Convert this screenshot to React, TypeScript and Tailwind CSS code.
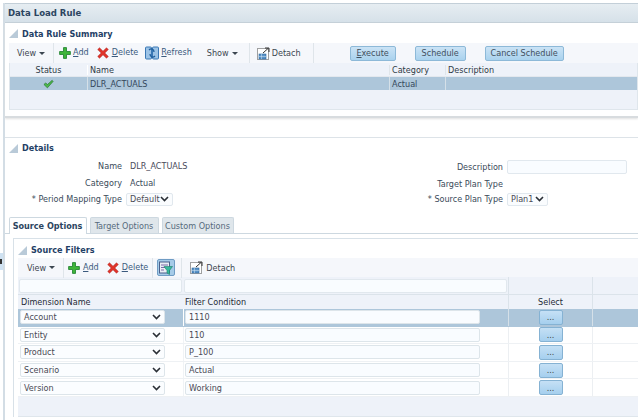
import React from "react";

const Corner = () => (
  <svg width="9" height="9" viewBox="0 0 9 9" className="shrink-0"><path d="M0 9 L9 0 L9 9 Z" fill="#b9cad8" /></svg>
);
const Plus = () => (
  <svg width="12" height="12" viewBox="0 0 12 12" className="shrink-0"><path d="M4.500 0.600h3v3.900h3.900v3H7.500v3.900h-3V7.500H0.600v-3h3.900z" fill="#3fb53a" stroke="#1c7d2c" strokeWidth="0.8" /></svg>
);
const Cross = () => (
  <svg width="12" height="12" viewBox="0 0 12 12" className="shrink-0"><path d="M2.500 0.800 6 4.200 9.500 0.800 11.300 2.600 7.800 6 11.300 9.400 9.500 11.200 6 7.800 2.500 11.200 0.700 9.400 4.200 6 0.700 2.600z" fill="#e0342a" stroke="#a81e1a" strokeWidth="0.5" /></svg>
);
const RefreshIcon = () => (
  <svg width="14" height="14" viewBox="0 0 14 14" className="shrink-0">
    <rect x="0.500" y="1" width="6" height="12" rx="1" fill="#9cc3e6" stroke="#3a78b5" />
    <rect x="7.500" y="1" width="6" height="12" rx="1" fill="#9cc3e6" stroke="#3a78b5" />
    <path d="M4 4c2-2 5-1 5 2M10 10c-2 2-5 1-5-2" fill="none" stroke="#1f5f9e" strokeWidth="1.300" />
  </svg>
);
const DetachIcon = () => (
  <svg width="13" height="13" viewBox="0 0 13 13" className="shrink-0">
    <rect x="0.500" y="1.500" width="11" height="11" fill="#fff" stroke="#444" strokeDasharray="1 1" />
    <rect x="2" y="7" width="7" height="5" fill="#5b93c7" stroke="#2b66a0" strokeWidth="0.6" />
    <path d="M2 9.500h7M4.500 7v5" stroke="#d8e8f5" strokeWidth="0.5" />
    <path d="M6 6 11 1.500M8 1h4v4" fill="none" stroke="#333" strokeWidth="1" />
  </svg>
);
const Check = () => (
  <svg width="11" height="10" viewBox="0 0 12 10"><path d="M1 5.500 3 3.800 4.800 5.600 10 1l1 1.200-6.200 7z" fill="#4cb84a" stroke="#23702c" strokeWidth="0.7" /></svg>
);
const FilterIcon = () => (
  <svg width="14" height="14" viewBox="0 0 14 14">
    <rect x="0.500" y="1" width="10" height="11" fill="#e9eef5" stroke="#4a5f8a" />
    <path d="M2 4h7M2 6.500h4M2 9h3" stroke="#7a6aa8" strokeWidth="1" />
    <path d="M5 5.500h8.500L10.500 9.500V13.500L8 12V9.500z" fill="#35b89c" stroke="#1f7f6c" strokeWidth="0.6" />
  </svg>
);
const Caret = () => <span className="ml-[3px] inline-block h-0 w-0 border-x-[3px] border-t-[3.5px] border-x-transparent border-t-[#3c4650]" />;
const Chev = () => (
  <svg width="9" height="6" viewBox="0 0 9 6" className="shrink-0"><path d="M1 1l3.500 3.500L8 1" fill="none" stroke="#2a2f36" strokeWidth="1.600" /></svg>
);

const Link = ({ k, rest }: { k: string; rest: string }) => (
  <span className="relative -top-px text-[#3b5a7d]"><span className="underline">{k}</span>{rest}</span>
);
const Sep = () => <div className="h-[20px] w-px bg-[#dfe5ea]" />;

const Heading = ({ children }: { children: React.ReactNode }) => (
  <div className="flex h-full items-center gap-[4px] text-[9px] font-bold text-[#1f3f66]">
    <Corner />
    <span>{children}</span>
  </div>
);

const Btn = ({ w, children }: { w: string; children: React.ReactNode }) => (
  <div className={`flex h-[15px] items-center justify-center rounded-[2px] border border-[#8db9d8] bg-gradient-to-b from-[#cbe3f5] to-[#a9d2ee] text-[#41505e] ${w}`}>{children}</div>
);

const Sel = ({ w, v }: { w: string; v: string }) => (
  <div className={`flex h-[13px] items-center justify-between rounded-[2px] border border-[#e1e8ee] bg-[#fafcfe] pl-[3px] pr-[3px] text-[#4a4a55] ${w}`}>
    <span>{v}</span><Chev />
  </div>
);

const Row = ({ dim, val, sel }: { dim: string; val: string; sel?: boolean }) => (
  <div className={`grid h-[17.600px] grid-cols-[166px_324px_85px_1fr] border-b ${sel ? "border-[#adc6da] bg-[#adc6da]" : "border-[#eef1f4] bg-white"}`}>
    <div className={`flex items-center border-r pl-[2px] ${sel ? "border-white" : "border-[#f0f3f6]"}`}>
      <div className="flex h-[14px] w-[145px] items-center justify-between rounded-[2px] border border-[#dde5ea] bg-[#fbfdff] pl-[3px] pr-[3px] text-[#4a4a55]">
        <span>{dim}</span><Chev />
      </div>
    </div>
    <div className="flex items-center pl-[1px]">
      <div className="flex h-[14px] w-[295px] items-center rounded-[2px] border border-[#dde5ea] bg-[#f9fcff] pl-[3px] text-[#4a4a55]">{val}</div>
    </div>
    <div className={`flex items-center justify-center border-x ${sel ? "border-[#d5e0e8]" : "border-[#eceff2]"}`}>
      <div className="flex h-[15px] w-[24px] items-center justify-center rounded-[2px] border border-[#85b2d3] bg-gradient-to-b from-[#c5e0f5] to-[#a5cfee] text-[#444]">...</div>
    </div>
    <div />
  </div>
);

export default function App() {
  return (
    <div className="relative h-[420px] w-[638px] overflow-hidden bg-white pl-[3px] pt-[3px] font-['DejaVu_Sans_Condensed','DejaVu_Sans',sans-serif] text-[9px] leading-[10px] text-[#3a4a5a]">
      <div className="absolute left-0 top-[253px] flex h-[17px] w-[3px] items-center bg-[#cfe2f2]">
        <div className="h-[5px] w-[2px] bg-[#333]" />
      </div>
      <div className="h-full border-l-2 border-[#d3dde5]">
        <div className="flex h-[20px] items-center border-y border-[#c3cfd8] bg-gradient-to-b from-[#e6edf2] to-[#d6e1e9] pl-[3px] text-[9.5px] font-bold text-[#2c4560]">Data Load Rule</div>

        <div className="h-[95px] border-b-2 border-[#d8dcdf] pl-[4px] shadow-[0_1px_2px_#e0e0e0]">
          <div className="h-[20px] pb-[2px] pt-[3px]"><Heading>Data Rule Summary</Heading></div>
          <div className="flex h-[20px] items-center bg-[#f5f7fb]">
            <div className="flex w-[44px] items-center pl-[8px] text-[#3c4650]">View<Caret /></div>
            <Sep />
            <div className="ml-[5px] flex items-center gap-[2px]"><Plus /><Link k="A" rest="dd" /></div>
            <div className="ml-[8px] flex items-center gap-[3px]"><Cross /><Link k="D" rest="elete" /></div>
            <div className="ml-[7px] flex items-center gap-[2px]"><RefreshIcon /><Link k="R" rest="efresh" /></div>
            <div className="ml-[15px] flex items-center text-[#3c4650]">Show<Caret /></div>
            <div className="ml-[11px]"><Sep /></div>
            <div className="ml-[7px] flex items-center gap-[2px] text-[#3c4650]"><DetachIcon />Detach</div>
            <div className="ml-[12px]"><Sep /></div>
            <div className="ml-[36px] flex items-center">
              <Btn w="w-[46px]"><span><span className="underline">E</span>xecute</span></Btn>
              <Btn w="ml-[19px] w-[51px]">Schedule</Btn>
              <Btn w="ml-[19px] w-[79px]">Cancel Schedule</Btn>
            </div>
          </div>
          <div className="border-x border-b border-[#dfe6ec] bg-[#eef2f9]">
            <div className="grid h-[14px] grid-cols-[78px_301px_57px_1fr] items-center border-b border-[#e3e8ee] text-[#2f3a46]">
              <div className="border-r border-white text-center">Status</div>
              <div className="pl-[2px]">Name</div>
              <div className="border-x border-[#dfe5ea] pl-[2px]">Category</div>
              <div className="pl-[2px]">Description</div>
            </div>
            <div className="grid h-[13px] grid-cols-[78px_301px_57px_1fr] items-center bg-[#adc6da] text-[#34465a]">
              <div className="flex h-full items-center justify-center border-r border-[#d5e0e8]"><Check /></div>
              <div className="pl-[2px]">DLR_ACTUALS</div>
              <div className="flex h-full items-center border-x border-[#d5e0e8] pl-[2px]">Actual</div>
              <div />
            </div>
            <div className="h-[19px]" />
          </div>
        </div>

        <div className="mt-[19px] border-t border-[#dde3e8] pl-[4px]">
          <div className="h-[20px]"><Heading>Details</Heading></div>
        </div>
        <div className="flex h-[53px]">
          <div className="w-[300px]">
            <div className="flex h-[16px] items-center"><div className="w-[117px] text-right">Name</div><div className="ml-[8px] text-[#4a4a5a]">DLR_ACTUALS</div></div>
            <div className="flex h-[18px] items-center"><div className="w-[117px] text-right">Category</div><div className="ml-[8px]">Actual</div></div>
            <div className="flex h-[14px] items-center"><div className="w-[117px] text-right">* Period Mapping Type</div><div className="ml-[4px]"><Sel w="w-[47px]" v="Default" /></div></div>
          </div>
          <div>
            <div className="flex h-[18px] items-center"><div className="w-[198px] text-right">Description</div><div className="ml-[4px] h-[14px] w-[120px] rounded-[2px] border border-[#e1e8ee] bg-[#f9fcff]" /></div>
            <div className="flex h-[16px] items-center"><div className="w-[198px] text-right">Target Plan Type</div></div>
            <div className="flex h-[14px] items-center"><div className="w-[198px] text-right">* Source Plan Type</div><div className="ml-[4px]"><Sel w="w-[41px]" v="Plan1" /></div></div>
          </div>
        </div>

        <div className="mt-[6px] flex h-[17px] items-end gap-[3px] border-b border-[#cdd8e0] pl-[3.5px]">
          <div className="relative top-px flex h-[17px] w-[78px] items-center justify-center rounded-t-[2px] border border-b-0 border-[#cdd8e0] bg-white font-bold text-[#2c4560]">Source Options</div>
          <div className="flex h-[16px] w-[69px] items-center justify-center rounded-t-[2px] border border-b-0 border-[#cdd8e0] bg-[#dfe6eb] text-[#566a7c]">Target Options</div>
          <div className="flex h-[16px] w-[72px] items-center justify-center rounded-t-[2px] border border-b-0 border-[#cdd8e0] bg-[#dfe6eb] text-[#566a7c]">Custom Options</div>
        </div>

        <div className="ml-[8px] mt-[4px] border-l border-t border-[#d8e1e8] pl-[4px]">
          <div className="h-[19px] pt-[3px]"><Heading>Source Filters</Heading></div>
          <div className="flex h-[19px] items-center bg-[#f5f7fb]">
            <div className="flex w-[45px] items-center pl-[9px] text-[#3c4650]">View<Caret /></div>
            <Sep />
            <div className="ml-[4px] flex items-center gap-[3px]"><Plus /><Link k="A" rest="dd" /></div>
            <div className="ml-[8px] flex items-center gap-[3px]"><Cross /><Link k="D" rest="elete" /></div>
            <div className="ml-[4px]"><Sep /></div>
            <div className="ml-[4px] flex h-[17px] w-[18px] items-center justify-center rounded-[2px] border border-[#6f9cc4] bg-[#a5cbe8]"><FilterIcon /></div>
            <div className="ml-[6px]"><Sep /></div>
            <div className="ml-[8px] flex items-center gap-[3px] text-[#3c4650]"><DetachIcon />Detach</div>
          </div>

          <div className="border-b border-[#dfe6ec] bg-[#eef2f9]">
            <div className="grid h-[18px] grid-cols-[166px_324px_85px_1fr] items-center border-b border-[#dbe3ea]">
              <div className="pl-[1px]"><div className="h-[14px] w-[163px] rounded-[2px] border border-[#e1e8ee] bg-[#f9fcff]" /></div>
              <div><div className="h-[14px] w-[323px] rounded-[2px] border border-[#e1e8ee] bg-[#f9fcff]" /></div>
              <div className="h-full border-x border-[#dbe3ea]" />
              <div />
            </div>
            <div className="grid h-[14px] grid-cols-[166px_324px_85px_1fr] items-center text-[#1f2a36]">
              <div className="pl-[3px]">Dimension Name</div>
              <div className="pl-[1px]">Filter Condition</div>
              <div className="flex h-full items-center justify-center border-x border-[#dbe3ea]">Select</div>
              <div />
            </div>
            <Row dim="Account" val="1110" sel />
            <Row dim="Entity" val="110" />
            <Row dim="Product" val="P_100" />
            <Row dim="Scenario" val="Actual" />
            <Row dim="Version" val="Working" />
            <div className="h-[19px]" />
          </div>
        </div>
      </div>
    </div>
  );
}
